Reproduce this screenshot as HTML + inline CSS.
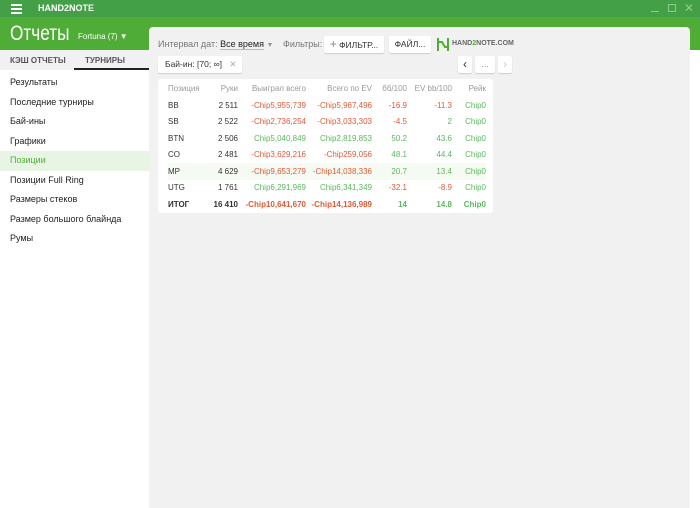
<!DOCTYPE html>
<html><head><meta charset="utf-8"><style>
*{box-sizing:border-box;margin:0;padding:0}
body{width:700px;height:508px;overflow:hidden;background:#fff;font-family:"Liberation Sans",sans-serif;position:relative;font-size:9px;color:#333}
.tb{position:absolute;left:0;top:0;width:700px;height:17px;background:#43a047}
.hd{position:absolute;left:0;top:17px;width:700px;height:33px;background:#4fad37}
.panel{position:absolute;left:149px;top:27px;width:541px;height:481px;background:#f1f1f1;border-radius:4px 4px 0 0}
.side{position:absolute;left:0;top:50px;width:149px}
.tabs{height:20px;background:#f1f1f1;position:relative;font-size:8px;font-weight:bold;color:#555}
.tabs span{position:absolute;top:6px}
.menu div{height:19.5px;line-height:19.5px;padding-left:10px;font-size:9px;color:#222}
.btn{position:absolute;background:#fff;border-radius:2px;box-shadow:0 1px 1px rgba(0,0,0,.15);font-size:8.5px;text-align:center}
table{border-collapse:collapse;font-size:8px}
td{height:16.5px;padding:0;text-align:right}
.r{color:#e05a35}.g{color:#5cb85c}
</style></head><body>
<div class="tb">
 <div style="position:absolute;left:11px;top:4px;width:11px;height:2px;background:#fff;box-shadow:0 4px 0 #fff,0 8px 0 #fff"></div>
 <div style="position:absolute;left:38px;top:3px;color:#fff;font-size:9px;font-weight:bold">HAND2NOTE</div>
 <div style="position:absolute;left:651px;top:11px;width:8px;height:1px;background:#8ccf8c"></div>
 <div style="position:absolute;left:668px;top:4px;width:8px;height:8px;border:1px solid #8ccf8c"></div>
 <div style="position:absolute;left:684px;top:1px;color:#8ccf8c;font-size:12px">✕</div>
</div>
<div class="hd">
 <div style="position:absolute;left:10px;top:5px;color:#fff;font-size:21px;transform:scaleX(0.82);transform-origin:left">Отчеты</div>
 <div style="position:absolute;left:78px;top:15px;color:#fff;font-size:8px">Fortuna (7) <span style="font-size:8px">▼</span></div>
</div>
<div class="panel">
 <div style="position:absolute;left:9px;top:12px;font-size:9px;color:#777">Интервал дат: <span style="color:#222;border-bottom:1px solid #bbb">Все время</span> <span style="color:#999;font-size:7px">▼</span></div>
 <div style="position:absolute;left:134px;top:12px;font-size:9px;color:#777">Фильтры:</div>
 <div class="btn" style="left:175px;top:9px;width:60px;height:17px;line-height:17px"><span style="color:#888;font-size:12px">+</span> ФИЛЬТР...</div>
 <div class="btn" style="left:240px;top:9px;width:42px;height:17px;line-height:17px">ФАЙЛ...</div>
 <svg style="position:absolute;left:287px;top:10px" width="14" height="15"><path d="M2 1v13M12 1v13M2 5h4l3 5h3" stroke="#4fad37" stroke-width="2" fill="none"/></svg>
 <div style="position:absolute;left:303px;top:13px;font-size:7px;font-weight:bold;color:#666">HAND<span style="color:#4fad37">2</span>NOTE.COM</div>
 <div class="btn" style="left:9px;top:29px;width:84px;height:17px;line-height:17px;text-align:left;padding-left:7px">Бай-ин: [70; ∞] <span style="color:#aaa;margin-left:5px">✕</span></div>
 <div class="btn" style="left:309px;top:29px;width:14px;height:17px;line-height:16px;font-size:12px">‹</div>
 <div class="btn" style="left:326px;top:29px;width:20px;height:17px;line-height:16px;color:#777">...</div>
 <div class="btn" style="left:349px;top:29px;width:14px;height:17px;line-height:16px;font-size:12px;color:#ccc">›</div>
 <div style="position:absolute;left:9px;top:52px;width:335px;height:134px;background:#fff;border-radius:3px;padding:0 0 0 10px">
 <table style="width:318px">
 <tr style="color:#999"><td style="text-align:left;width:40px;height:18px">Позиция</td><td style="width:30px">Руки</td><td style="width:68px">Выиграл всего</td><td style="width:66px">Всего по EV</td><td style="width:35px">бб/100</td><td style="width:45px">EV bb/100</td><td>Рейк</td></tr>
 <tr><td style="text-align:left">BB</td><td>2 511</td><td class="r">-Chip5,955,739</td><td class="r">-Chip5,967,496</td><td class="r">-16.9</td><td class="r">-11.3</td><td class="g">Chip0</td></tr>
 <tr><td style="text-align:left">SB</td><td>2 522</td><td class="r">-Chip2,736,254</td><td class="r">-Chip3,033,303</td><td class="r">-4.5</td><td class="g">2</td><td class="g">Chip0</td></tr>
 <tr><td style="text-align:left">BTN</td><td>2 506</td><td class="g">Chip5,040,849</td><td class="g">Chip2,819,853</td><td class="g">50.2</td><td class="g">43.6</td><td class="g">Chip0</td></tr>
 <tr><td style="text-align:left">CO</td><td>2 481</td><td class="r">-Chip3,629,216</td><td class="r">-Chip259,056</td><td class="g">48.1</td><td class="g">44.4</td><td class="g">Chip0</td></tr>
 <tr style="background:#f5fbf3"><td style="text-align:left">MP</td><td>4 629</td><td class="r">-Chip9,653,279</td><td class="r">-Chip14,038,336</td><td class="g">20.7</td><td class="g">13.4</td><td class="g">Chip0</td></tr>
 <tr><td style="text-align:left">UTG</td><td>1 761</td><td class="g">Chip6,291,969</td><td class="g">Chip6,341,349</td><td class="r">-32.1</td><td class="r">-8.9</td><td class="g">Chip0</td></tr>
 <tr style="font-weight:bold"><td style="text-align:left">ИТОГ</td><td>16 410</td><td class="r">-Chip10,641,670</td><td class="r">-Chip14,136,989</td><td class="g">14</td><td class="g">14.8</td><td class="g">Chip0</td></tr>
 </table></div>
</div>
<div class="side">
 <div class="tabs"><span style="left:10px">КЭШ ОТЧЕТЫ</span><span style="left:85px">ТУРНИРЫ</span><div style="position:absolute;left:74px;top:18px;width:75px;height:2px;background:#222"></div></div>
 <div class="menu" style="padding-top:3px">
 <div>Результаты</div><div>Последние турниры</div><div>Бай-ины</div><div>Графики</div>
 <div style="background:#e8f5e4;color:#4fad37">Позиции</div><div>Позиции Full Ring</div><div>Размеры стеков</div><div>Размер большого блайнда</div><div>Румы</div>
 </div>
</div>
</body></html>
